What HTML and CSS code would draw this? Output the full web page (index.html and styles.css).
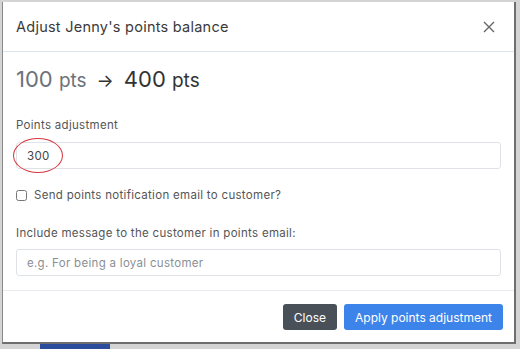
FILE: index.html
```html
<!DOCTYPE html>
<html lang="en">
<head>
    <meta charset="UTF-8">
    <meta name="viewport" content="width=device-width, initial-scale=1.0">
    <title>Adjust points balance</title>
    <link rel="stylesheet" href="styles.css">
</head>
<body>
    <div class="modal">
        <div class="modal-header">
            <h5 class="modal-title">Adjust Jenny's points balance</h5>
            <button class="btn-close" type="button" aria-label="Close">
                <svg width="12" height="12" viewBox="0 0 12 12">
                    <path d="M1 1 L11 11 M11 1 L1 11" stroke="#666" stroke-width="1.4" fill="none"/>
                </svg>
            </button>
        </div>
        <div class="modal-body">
            <div class="points-preview">
                <span class="old">100 <small>pts</small></span>
                <span class="arrow">&rarr;</span>
                <span class="new">400 <small>pts</small></span>
            </div>
            <label class="form-label" for="points">Points adjustment</label>
            <div class="input-wrap">
                <input class="form-control" type="text" id="points" value="300">
                <span class="highlight"></span>
            </div>
            <label class="form-check">
                <input type="checkbox">
                <span>Send points notification email to customer?</span>
            </label>
            <label class="form-label msg-label" for="message">Include message to the customer in points email:</label>
            <input class="form-control" type="text" id="message" placeholder="e.g. For being a loyal customer">
        </div>
        <div class="modal-footer">
            <button class="btn btn-secondary" type="button">Close</button>
            <button class="btn btn-primary" type="button">Apply points adjustment</button>
        </div>
    </div>
    <div class="page-behind">
        <span class="behind-btn"></span>
    </div>
</body>
</html>
```

FILE: styles.css
```css
body {
    margin: 0;
    padding: 2px 0 0 0;
    height: 349px;
    box-sizing: border-box;
    overflow: hidden;
    background-color: #d4d4d4;
    font-family: Inter, "Open Sans", sans-serif;
    color: #3a3a3a;
}

.modal {
    width: 514px;
    height: 342px;
    margin-left: 2px;
    box-sizing: border-box;
    background-color: #fff;
    border-left: 1px solid #8a8a8a;
    border-right: 2px solid #6e6e6e;
    border-bottom: 2px solid #6e6e6e;
    display: flex;
    flex-direction: column;
}

.modal-header {
    display: flex;
    align-items: center;
    justify-content: space-between;
    height: 50px;
    box-sizing: border-box;
    padding: 0 19px 0 13px;
    border-bottom: 1px solid #dde6f0;
}

.modal-title {
    margin: 0;
    font-size: 14.5px;
    font-weight: 400;
    letter-spacing: 0.25px;
    color: #3a3a3a;
}

.btn-close {
    border: none;
    background: none;
    padding: 0;
    width: 12px;
    height: 12px;
    display: flex;
}

.modal-body {
    padding: 13px 13px 14px 13px;
    display: flex;
    flex-direction: column;
    border-bottom: 1px solid #e9edf1;
}

.points-preview {
    display: flex;
    align-items: baseline;
    gap: 10px;
    height: 28px;
    line-height: 28px;
    font-size: 22px;
}

.points-preview small {
    font-size: 19px;
}

.old {
    color: #6c727a;
}

.arrow {
    font-size: 18px;
    color: #333;
}

.new {
    color: #333;
}

.form-label {
    display: block;
    margin-top: 24px;
    font-size: 11.5px;
    line-height: 16px;
    letter-spacing: 0.3px;
    color: #555;
}

.msg-label {
    margin-top: 22px;
}

.input-wrap {
    position: relative;
    margin-top: 9px;
}

.form-control {
    display: block;
    width: 100%;
    height: 27px;
    box-sizing: border-box;
    padding: 0 10px;
    border: 1px solid #dfe3e8;
    border-radius: 3px;
    font-family: inherit;
    font-size: 11.5px;
    letter-spacing: 0.3px;
    color: #444;
}

.form-control::placeholder {
    color: #8a8f96;
}

#message {
    margin-top: 8px;
}

.highlight {
    position: absolute;
    left: -3px;
    top: -4px;
    width: 48px;
    height: 33px;
    border: 1.3px solid #d9363e;
    border-radius: 50%;
}

.form-check {
    display: flex;
    align-items: center;
    gap: 7px;
    margin-top: 18px;
    font-size: 11.5px;
    line-height: 16px;
    letter-spacing: 0.3px;
    color: #555;
}

.form-check input {
    margin: 0;
    width: 11px;
    height: 11px;
}

.modal-footer {
    display: flex;
    justify-content: flex-end;
    gap: 7px;
    padding: 13px 11px 0 13px;
}

.btn {
    height: 26px;
    padding: 0 11px;
    border: none;
    border-radius: 3px;
    font-family: inherit;
    font-size: 12px;
    color: #fff;
    cursor: pointer;
}

.btn-secondary {
    background-color: #4a5057;
}

.btn-primary {
    background-color: #3d84ea;
}

.page-behind {
    padding-left: 40px;
}

.behind-btn {
    display: block;
    width: 70px;
    height: 6px;
    background-color: #2c4c9c;
}
```
